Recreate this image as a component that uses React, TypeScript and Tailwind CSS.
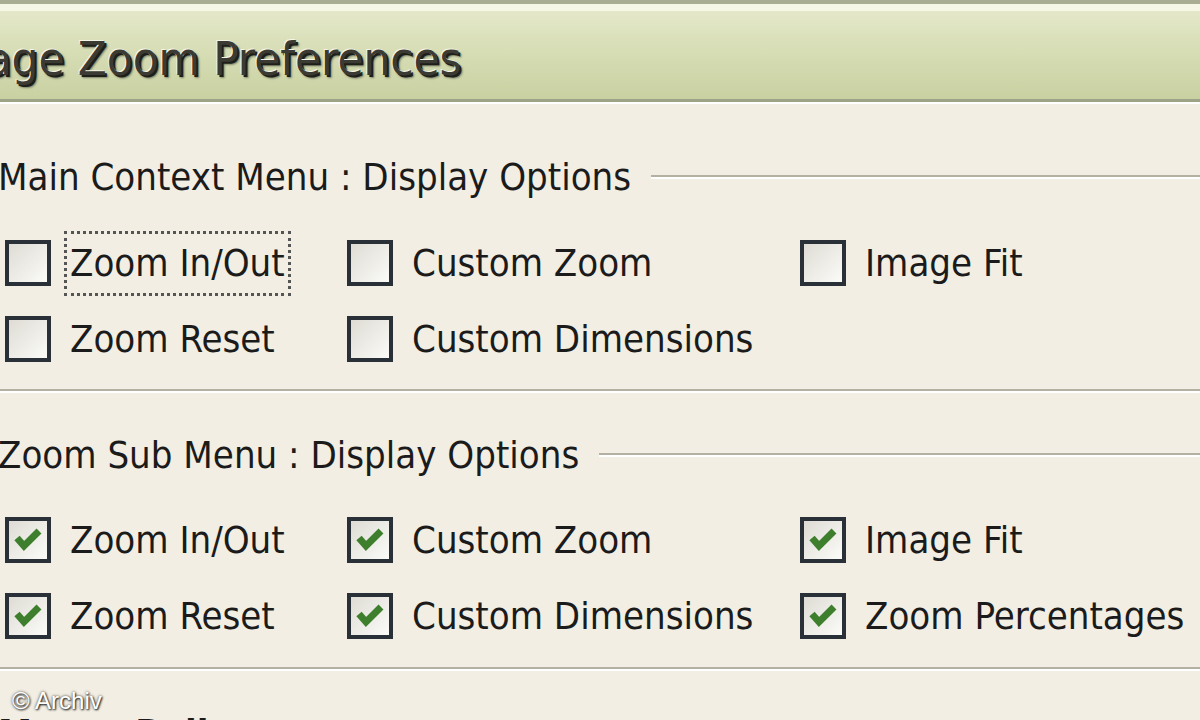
import type { FC } from 'react';

type Item = { label: string; checked: boolean; focus?: boolean };

const mainOptions: Item[][] = [
  [
    { label: 'Zoom In/Out', checked: false, focus: true },
    { label: 'Custom Zoom', checked: false },
    { label: 'Image Fit', checked: false },
  ],
  [
    { label: 'Zoom Reset', checked: false },
    { label: 'Custom Dimensions', checked: false },
  ],
];

const subOptions: Item[][] = [
  [
    { label: 'Zoom In/Out', checked: true },
    { label: 'Custom Zoom', checked: true },
    { label: 'Image Fit', checked: true },
  ],
  [
    { label: 'Zoom Reset', checked: true },
    { label: 'Custom Dimensions', checked: true },
    { label: 'Zoom Percentages', checked: true },
  ],
];

const CheckBox: FC<{ checked: boolean }> = ({ checked }) => (
  <div className="w-[46px] h-[46px] shrink-0 border-[4px] border-[#2a3038] bg-gradient-to-br from-[#dedcd4] to-[#fbfbf8] flex items-center justify-center">
    {checked && (
      <svg width="38" height="38" viewBox="0 0 38 38">
        <path d="M8 17 L15 25 L30 10" fill="none" stroke="#3d7f2d" strokeWidth="7" strokeLinejoin="miter" />
      </svg>
    )}
  </div>
);

const Option: FC<{ item: Item }> = ({ item }) => (
  <div className="flex items-center gap-[16px] whitespace-nowrap">
    <CheckBox checked={item.checked} />
    <span
      className={
        item.focus
          ? 'px-[3px] py-[1px] -ml-[3px] border-[3px] border-dotted border-[#555]'
          : 'px-[3px] py-[1px] -ml-[3px] border-[3px] border-transparent'
      }
    >
      {item.label}
    </span>
  </div>
);

const GroupHeader: FC<{ title: string }> = ({ title }) => (
  <div className="flex items-center h-[44px] gap-[20px]">
    <span className="whitespace-nowrap">{title}</span>
    <div className="flex-1 border-t-2 border-t-[#b4b0a2] border-b-2 border-b-white" />
  </div>
);

const OptionRows: FC<{ rows: Item[][] }> = ({ rows }) => (
  <div className="flex flex-col">
    {rows.map((row, i) => (
      <div key={i} className="grid grid-cols-[342px_453px_1fr] h-[76px] items-center pl-[7px]">
        {row.map((item) => (
          <Option key={item.label} item={item} />
        ))}
      </div>
    ))}
  </div>
);

const Divider: FC = () => <div className="border-t-2 border-t-[#b4b0a2] border-b-2 border-b-white" />;

export default function App() {
  return (
    <div className="relative w-[1200px] h-[720px] overflow-hidden bg-[#f2eee3] text-[#1b1b1b] font-['DejaVu_Sans','Liberation_Sans',sans-serif] [font-stretch:condensed] text-[38px]">
      {/* title bar */}
      <div className="h-[4px] bg-[#a9ad92]" />
      <div className="h-[7px] bg-[#f6f7e4]" />
      <div className="h-[88px] flex items-center bg-gradient-to-b from-[#e4e8c9] via-[#d6dcb3] to-[#c9d1a2]">
        <span className="-ml-[68px] pt-[8px] whitespace-nowrap text-[47px] text-[#3b3b33] [text-shadow:-1px_-1px_0_#f4f5e6,2px_2px_0_#1f1f1a,3px_3px_2px_#7d8268]">
          Image Zoom Preferences
        </span>
      </div>
      <div className="h-[3px] bg-[#9da386]" />
      <div className="h-[2px] bg-white" />

      <div className="flex flex-col -ml-[2px]">
        <div className="mt-[51px]">
          <GroupHeader title="Main Context Menu : Display Options" />
        </div>
        <div className="mt-[26px]">
          <OptionRows rows={mainOptions} />
        </div>
        <div className="mt-[12px]">
          <Divider />
        </div>
        <div className="mt-[40px]">
          <GroupHeader title="Zoom Sub Menu : Display Options" />
        </div>
        <div className="mt-[25px]">
          <OptionRows rows={subOptions} />
        </div>
        <div className="mt-[13px]">
          <Divider />
        </div>
        <div className="mt-[43px] font-bold text-[38px] leading-none whitespace-nowrap">Mouse Roll</div>
      </div>

      {/* watermark */}
      <div className="absolute left-[12px] top-[683px] text-[24px] [font-stretch:normal] text-white font-['Liberation_Sans',sans-serif] [text-shadow:1px_1px_2px_#222,0_0_3px_#444]">
        © Archiv
      </div>
    </div>
  );
}
